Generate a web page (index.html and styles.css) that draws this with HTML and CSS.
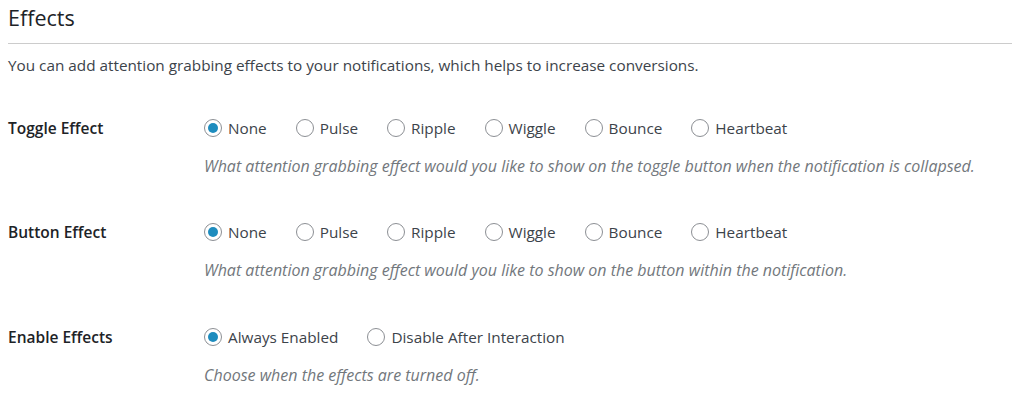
FILE: index.html
```html
<!DOCTYPE html>
<html>
<head>
<meta charset="utf-8">
<link rel="stylesheet" href="styles.css">
</head>
<body>
<div class="page">
  <h2 class="title">Effects</h2>
  <p class="intro">You can add attention grabbing effects to your notifications, which helps to increase conversions.</p>

  <div class="row first">
    <div class="label">Toggle Effect</div>
    <div class="field">
      <div class="options">
        <label class="opt"><span class="radio checked"></span>None</label>
        <label class="opt"><span class="radio"></span>Pulse</label>
        <label class="opt"><span class="radio"></span>Ripple</label>
        <label class="opt"><span class="radio"></span>Wiggle</label>
        <label class="opt"><span class="radio"></span>Bounce</label>
        <label class="opt"><span class="radio"></span>Heartbeat</label>
      </div>
      <p class="desc">What attention grabbing effect would you like to show on the toggle button when the notification is collapsed.</p>
    </div>
  </div>

  <div class="row">
    <div class="label">Button Effect</div>
    <div class="field">
      <div class="options">
        <label class="opt"><span class="radio checked"></span>None</label>
        <label class="opt"><span class="radio"></span>Pulse</label>
        <label class="opt"><span class="radio"></span>Ripple</label>
        <label class="opt"><span class="radio"></span>Wiggle</label>
        <label class="opt"><span class="radio"></span>Bounce</label>
        <label class="opt"><span class="radio"></span>Heartbeat</label>
      </div>
      <p class="desc">What attention grabbing effect would you like to show on the button within the notification.</p>
    </div>
  </div>

  <div class="row last">
    <div class="label">Enable Effects</div>
    <div class="field">
      <div class="options">
        <label class="opt"><span class="radio checked"></span>Always Enabled</label>
        <label class="opt"><span class="radio"></span>Disable After Interaction</label>
      </div>
      <p class="desc">Choose when the effects are turned off.</p>
    </div>
  </div>
</div>
</body>
</html>
```

FILE: styles.css
```css
html, body {
  margin: 0;
  padding: 0;
  background: #ffffff;
}
body {
  font-family: "Open Sans", "Noto Sans", sans-serif;
  font-size: 15.3px;
  color: #3c434a;
}
.page {
  padding-left: 8px;
}
.title {
  margin: 0;
  padding: 4px 0 11px;
  font-size: 21.5px;
  font-weight: 400;
  line-height: 28px;
  color: #1d2327;
  border-bottom: 1px solid #cccccc;
}
.intro {
  margin: 0;
  padding-top: 10px;
  line-height: 22px;
  color: #3c434a;
}
.row {
  display: grid;
  grid-template-columns: 196px 1fr;
  padding-top: 44px;
}
.row.first {
  padding-top: 41px;
}
.row.last {
  padding-top: 45px;
}
.label {
  font-size: 15.5px;
  font-weight: 600;
  color: #1d2327;
  line-height: 22px;
}
.options {
  display: flex;
  align-items: center;
  line-height: 22px;
}
.opt {
  display: inline-flex;
  align-items: center;
  margin-right: 29px;
  color: #3c434a;
}
.radio {
  box-sizing: border-box;
  width: 18px;
  height: 18px;
  border: 1px solid #8c8f94;
  border-radius: 50%;
  margin-right: 6px;
  display: inline-flex;
  align-items: center;
  justify-content: center;
  background: #fff;
}
.radio.checked::before {
  content: "";
  width: 10px;
  height: 10px;
  border-radius: 50%;
  background: #1e8cbe;
}
.desc {
  margin: 16px 0 0;
  font-size: 16px;
  font-style: italic;
  color: #72777c;
  line-height: 22px;
}
```
